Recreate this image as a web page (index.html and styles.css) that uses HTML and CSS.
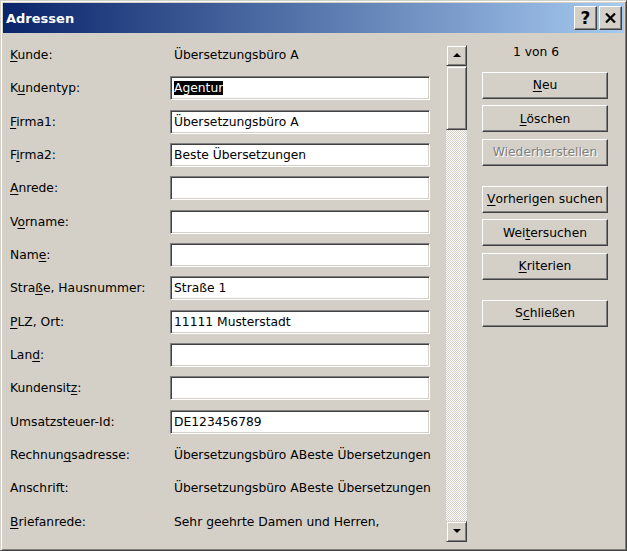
FILE: index.html
```html
<!DOCTYPE html>
<html lang="de">
<head>
<meta charset="utf-8">
<title>Adressen</title>
<link rel="stylesheet" href="styles.css">
</head>
<body>
<div class="window">
  <div class="titlebar">
    <span class="title">Adressen</span>
    <div class="tbtns">
      <div class="tbtn help">?</div>
      <div class="tbtn close">
        <svg width="11" height="10" viewBox="0 0 11 10"><path d="M1 0.5 L10 9.5 M10 0.5 L1 9.5" stroke="#000" stroke-width="2.2" fill="none"/></svg>
      </div>
    </div>
  </div>
  <div class="body">
    <div class="form">
      <div class="label"><u>K</u>unde:</div><div class="value">Übersetzungsbüro A</div>
      <div class="label">K<u>u</u>ndentyp:</div><div class="field"><span class="sel">Agentur</span></div>
      <div class="label"><u>F</u>irma1:</div><div class="field">Übersetzungsbüro A</div>
      <div class="label">F<u>i</u>rma2:</div><div class="field">Beste Übersetzungen</div>
      <div class="label"><u>A</u>nrede:</div><div class="field"></div>
      <div class="label">V<u>o</u>rname:</div><div class="field"></div>
      <div class="label">Nam<u>e</u>:</div><div class="field"></div>
      <div class="label">Stra<u>ß</u>e, Hausnummer:</div><div class="field">Straße 1</div>
      <div class="label"><u>P</u>LZ, Ort:</div><div class="field">11111 Musterstadt</div>
      <div class="label">Lan<u>d</u>:</div><div class="field"></div>
      <div class="label">Kundensit<u>z</u>:</div><div class="field"></div>
      <div class="label">Umsatzsteuer-Id:</div><div class="field">DE123456789</div>
      <div class="label">Rechnun<u>g</u>sadresse:</div><div class="value">Übersetzungsbüro ABeste Übersetzungen</div>
      <div class="label">Anschrift:</div><div class="value">Übersetzungsbüro ABeste Übersetzungen</div>
      <div class="label"><u>B</u>riefanrede:</div><div class="value">Sehr geehrte Damen und Herren,</div>
    </div>
    <div class="scrollbar">
      <div class="sbtn"><span class="arrow-up"></span></div>
      <div class="thumb"></div>
      <div class="track"></div>
      <div class="sbtn"><span class="arrow-down"></span></div>
    </div>
    <div class="side">
      <div class="counter">1 von 6</div>
      <div class="btn"><u>N</u>eu</div>
      <div class="btn"><u>L</u>öschen</div>
      <div class="btn disabled">Wiederherstellen</div>
      <div class="btn group"><u>V</u>orherigen suchen</div>
      <div class="btn">Wei<u>t</u>ersuchen</div>
      <div class="btn"><u>K</u>riterien</div>
      <div class="btn group">S<u>c</u>hließen</div>
    </div>
  </div>
</div>
</body>
</html>
```
FILE: styles.css
```css
html, body {
  margin: 0;
  padding: 0;
  background: #d4d0c8;
}
body {
  font-family: "DejaVu Sans", sans-serif;
  font-size: 12.3px;
  color: #000;
}
u {
  text-decoration-thickness: 1px;
  text-underline-offset: 2px;
}
.window {
  box-sizing: border-box;
  width: 627px;
  height: 551px;
  border: 1px solid;
  border-color: #d4d0c8 #404040 #404040 #d4d0c8;
  box-shadow: inset 1px 1px #fff, inset -1px -1px #808080;
  padding: 2px;
  background: #d4d0c8;
  display: flex;
  flex-direction: column;
}
.titlebar {
  height: 30px;
  background: linear-gradient(to right, #0a246a, #a6caf0);
  display: flex;
  align-items: center;
  justify-content: space-between;
  padding: 0 2px 0 3px;
}
.title {
  color: #fff;
  font-weight: bold;
  font-size: 13px;
}
.tbtns {
  display: flex;
  gap: 2px;
}
.tbtn {
  box-sizing: border-box;
  width: 23px;
  height: 24px;
  background: #d4d0c8;
  border: 1px solid;
  border-color: #fff #404040 #404040 #fff;
  box-shadow: inset -1px -1px #808080, inset 1px 1px #d4d0c8;
  display: flex;
  align-items: center;
  justify-content: center;
}
.help {
  font-weight: bold;
  font-size: 17px;
  line-height: 1;
}
.body {
  flex: 1;
  display: flex;
  align-items: flex-start;
  padding: 5.33px 0 0 7px;
}
.form {
  display: grid;
  grid-template-columns: 160px 260px;
  grid-auto-rows: 33.33px;
  align-items: center;
}
.label, .value {
  white-space: nowrap;
}
.value {
  padding-left: 4px;
}
.field {
  box-sizing: border-box;
  height: 24px;
  background: #fff;
  border: 1px solid;
  border-color: #808080 #fff #fff #808080;
  box-shadow: inset 1px 1px #404040, inset -1px -1px #d4d0c8;
  padding: 0 3px;
  display: flex;
  align-items: center;
  white-space: nowrap;
}
.sel {
  background: #000;
  color: #fff;
}
.scrollbar {
  margin: 6.67px 0 0 16px;
  width: 21px;
  height: 497px;
  display: flex;
  flex-direction: column;
}
.sbtn, .thumb {
  box-sizing: border-box;
  background: #d4d0c8;
  border: 1px solid;
  border-color: #d4d0c8 #404040 #404040 #d4d0c8;
  box-shadow: inset 1px 1px #fff, inset -1px -1px #808080;
}
.sbtn {
  height: 21px;
  display: flex;
  align-items: center;
  justify-content: center;
}
.thumb {
  height: 64px;
}
.track {
  flex: 1;
  background: repeating-conic-gradient(#fff 0 25%, #d4d0c8 0 50%) 0 0 / 2px 2px;
}
.arrow-up {
  width: 0;
  height: 0;
  border-left: 4px solid transparent;
  border-right: 4px solid transparent;
  border-bottom: 4px solid #000;
}
.arrow-down {
  width: 0;
  height: 0;
  border-left: 4px solid transparent;
  border-right: 4px solid transparent;
  border-top: 4px solid #000;
}
.side {
  margin-left: 15px;
  padding-top: 5.67px;
  display: flex;
  flex-direction: column;
  width: 126px;
}
.counter {
  height: 16px;
  line-height: 16px;
  padding-left: 31px;
  margin-bottom: 12px;
}
.btn {
  box-sizing: border-box;
  height: 27px;
  margin-bottom: 6.5px;
  border: 1px solid;
  border-color: #fff #404040 #404040 #fff;
  box-shadow: inset -1px -1px #808080, inset 1px 1px #d4d0c8;
  display: flex;
  align-items: center;
  justify-content: center;
  white-space: nowrap;
}
.btn.group {
  margin-top: 13.5px;
}
.btn.disabled {
  color: #808080;
  text-shadow: 1px 1px #fff;
}
```
